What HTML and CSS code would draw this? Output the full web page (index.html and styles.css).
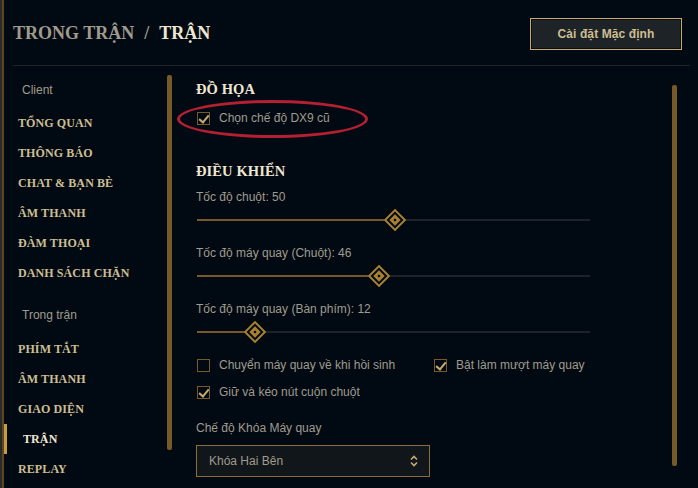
FILE: index.html
```html
<!DOCTYPE html>
<html lang="vi">
<head>
    <meta charset="UTF-8">
    <meta name="viewport" content="width=device-width, initial-scale=1.0">
    <title>Trong trận / Trận</title>
    <link rel="stylesheet" href="styles.css">
</head>
<body>
    <div class="app">
        <div class="edge"></div>

        <div class="main">
            <div class="topbar">
                <h1 class="page-title">
                    <span class="crumb">TRONG TRẬN</span>
                    <span class="sep">/</span>
                    <span class="current">TRẬN</span>
                </h1>
                <button class="reset-btn">Cài đặt Mặc định</button>
            </div>

            <div class="body">
                <nav class="sidebar">
                    <div class="nav-list">
                        <div class="nav-group">Client</div>
                        <a class="nav-item">TỔNG QUAN</a>
                        <a class="nav-item">THÔNG BÁO</a>
                        <a class="nav-item">CHAT &amp; BẠN BÈ</a>
                        <a class="nav-item">ÂM THANH</a>
                        <a class="nav-item">ĐÀM THOẠI</a>
                        <a class="nav-item">DANH SÁCH CHẶN</a>

                        <div class="nav-group second">Trong trận</div>
                        <a class="nav-item">PHÍM TẮT</a>
                        <a class="nav-item">ÂM THANH</a>
                        <a class="nav-item">GIAO DIỆN</a>
                        <a class="nav-item active">TRẬN</a>
                        <a class="nav-item">REPLAY</a>
                    </div>
                    <div class="side-scroll"></div>
                </nav>

                <section class="content">
                    <h2 class="section-title">ĐỒ HỌA</h2>
                    <div class="check-row first">
                        <label class="check">
                            <span class="box checked"></span>
                            Chọn chế độ DX9 cũ
                        </label>
                        <div class="highlight"></div>
                    </div>

                    <h2 class="section-title controls">ĐIỀU KHIỂN</h2>

                    <div class="slider">
                        <div class="slider-label">Tốc độ chuột: 50</div>
                        <div class="track">
                            <div class="fill" style="width: 50.4%;"></div>
                            <span class="thumb" style="left: 50.4%;"></span>
                        </div>
                    </div>

                    <div class="slider">
                        <div class="slider-label">Tốc độ máy quay (Chuột): 46</div>
                        <div class="track">
                            <div class="fill" style="width: 46.3%;"></div>
                            <span class="thumb" style="left: 46.3%;"></span>
                        </div>
                    </div>

                    <div class="slider">
                        <div class="slider-label">Tốc độ máy quay (Bàn phím): 12</div>
                        <div class="track">
                            <div class="fill" style="width: 14.8%;"></div>
                            <span class="thumb" style="left: 14.8%;"></span>
                        </div>
                    </div>

                    <div class="check-grid">
                        <label class="check">
                            <span class="box"></span>
                            Chuyển máy quay về khi hồi sinh
                        </label>
                        <label class="check">
                            <span class="box checked"></span>
                            Bật làm mượt máy quay
                        </label>
                        <label class="check">
                            <span class="box checked"></span>
                            Giữ và kéo nút cuộn chuột
                        </label>
                    </div>

                    <div class="field-label">Chế độ Khóa Máy quay</div>
                    <div class="select">
                        <span>Khóa Hai Bên</span>
                        <svg class="select-arrows" width="8" height="12" viewBox="0 0 8 12">
                            <path d="M1 4.5 L4 1.5 L7 4.5" fill="none" stroke="#c8aa6e" stroke-width="1.6"/>
                            <path d="M1 7.5 L4 10.5 L7 7.5" fill="none" stroke="#c8aa6e" stroke-width="1.6"/>
                        </svg>
                    </div>
                </section>

                <div class="main-scroll"></div>
            </div>
        </div>
    </div>
</body>
</html>
```

FILE: styles.css
```css
* {
    margin: 0;
    padding: 0;
    box-sizing: border-box;
}

html, body {
    width: 698px;
    height: 488px;
    overflow: hidden;
}

body {
    background: #010a13;
    font-family: "Liberation Sans", Arial, sans-serif;
    color: #a09b8c;
}

.app {
    display: flex;
    height: 488px;
}

/* thin frame strip at the far left */
.edge {
    width: 4px;
    flex-shrink: 0;
    background: linear-gradient(90deg, #2b2a26 0%, #2b2a26 50%, #5b4723 50%, #5b4723 100%);
}

.main {
    flex: 1;
    display: flex;
    flex-direction: column;
    min-height: 0;
}

.topbar {
    height: 66px;
    flex-shrink: 0;
    margin: 0 8px 0 9px;
    display: flex;
    justify-content: space-between;
    align-items: center;
    border-bottom: 1px solid #1e2328;
    padding-top: 1px;
}

.page-title {
    font-family: "Liberation Serif", serif;
    font-weight: bold;
    font-size: 18px;
    color: #a09b8c;
    display: flex;
    gap: 10px;
}

.page-title .current {
    color: #f0e6d2;
}

.reset-btn {
    width: 152px;
    height: 32px;
    margin-top: 2px;
    margin-right: 8px;
    background: #1e2328;
    border: 1px solid #c8aa6e;
    box-shadow: inset 0 0 0 1px #0a0e12;
    color: #cdbe91;
    font-family: "Liberation Sans", Arial, sans-serif;
    font-size: 12px;
    font-weight: bold;
    letter-spacing: 0.1px;
}

.body {
    flex: 1;
    min-height: 0;
    display: flex;
}

.sidebar {
    width: 168px;
    display: flex;
    justify-content: space-between;
}

.nav-list {
    padding-top: 14px;
    display: flex;
    flex-direction: column;
}

.nav-group {
    height: 20px;
    line-height: 20px;
    padding-left: 18px;
    margin-bottom: 8px;
    font-size: 12px;
    color: #a09b8c;
}

.nav-group.second {
    margin-top: 17px;
    margin-bottom: 9px;
}

.nav-item {
    height: 30px;
    line-height: 30px;
    padding-left: 14px;
    font-family: "Liberation Serif", serif;
    font-weight: bold;
    font-size: 12px;
    letter-spacing: 0.1px;
    color: #cdbe91;
    cursor: pointer;
}

.nav-item.active {
    border-left: 3px solid #c89b3c;
    padding-left: 16px;
    color: #f0e6d2;
}

.side-scroll {
    width: 5px;
    height: 375px;
    margin-top: 9px;
    border-radius: 2px;
    background: #785a28;
}

.content {
    flex: 1;
    padding: 13px 0 0 24px;
}

.section-title {
    height: 20px;
    line-height: 20px;
    font-family: "Liberation Serif", serif;
    font-weight: bold;
    font-size: 14.5px;
    letter-spacing: 0.1px;
    color: #f0e6d2;
}

.section-title.controls {
    margin-top: 33px;
}

.check-row {
    position: relative;
    margin-top: 9px;
}

/* red marker ring drawn over the first option */
.highlight {
    position: absolute;
    left: -19px;
    top: -8px;
    width: 191px;
    height: 38px;
    border: 3px solid #b41f31;
    border-radius: 50%;
    pointer-events: none;
}

.check {
    display: flex;
    align-items: center;
    gap: 9px;
    height: 20px;
    font-size: 12px;
    color: #a09b8c;
}

.box {
    width: 13px;
    height: 13px;
    margin-left: 1px;
    border: 1px solid #785a28;
    position: relative;
    flex-shrink: 0;
}

.box.checked::after {
    content: '';
    position: absolute;
    left: 3px;
    top: 0px;
    width: 4px;
    height: 8px;
    border: solid #c8aa6e;
    border-width: 0 2px 2px 0;
    transform: rotate(40deg);
}

.slider {
    margin-top: 6px;
    margin-bottom: 10px;
    width: 394px;
}

.slider + .slider {
    margin-top: 0;
}

.slider-label {
    height: 20px;
    line-height: 20px;
    font-size: 12px;
}

.track {
    position: relative;
    height: 26px;
    margin-left: 1px;
    display: flex;
    align-items: center;
    background: linear-gradient(#1e2328, #1e2328) no-repeat left center / 100% 2px;
}

.fill {
    height: 2px;
    background: #785a28;
}

.thumb {
    position: absolute;
    top: 5px;
    width: 16px;
    height: 16px;
    margin-left: -8px;
    background: #010a13;
    border: 2px solid #a8802f;
    transform: rotate(45deg);
}

.thumb::after {
    content: '';
    position: absolute;
    left: 2px;
    top: 2px;
    width: 8px;
    height: 8px;
    background: radial-gradient(circle, #010a13 0 1.5px, #a8802f 1.6px 100%);
}

.check-grid {
    display: grid;
    grid-template-columns: 237px auto;
    row-gap: 7px;
    margin-top: 1px;
}

.field-label {
    height: 20px;
    line-height: 20px;
    margin-top: 16px;
    font-size: 12px;
}

.select {
    width: 234px;
    height: 32px;
    margin-top: 7px;
    padding: 0 11px 0 12px;
    display: flex;
    justify-content: space-between;
    align-items: center;
    background: #11161b;
    border: 1px solid #8a6d3b;
    font-size: 12px;
    color: #a09b8c;
}

.main-scroll {
    width: 5px;
    height: 381px;
    margin: 19px 21px 0 0;
    border-radius: 2px;
    background: #785a28;
}
```
